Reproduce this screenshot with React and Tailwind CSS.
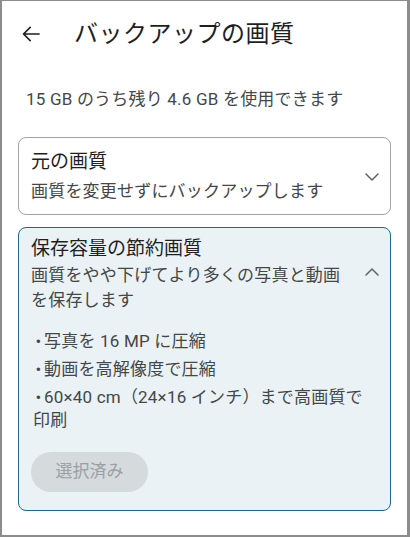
import React from 'react';
import { ChevronDown, ChevronUp } from 'lucide-react';

const font = { fontFamily: 'Roboto, "Noto Sans CJK JP", sans-serif' };

const bullets = [
  '写真を 16 MP に圧縮',
  '動画を高解像度で圧縮',
  '60×40 cm（24×16 インチ）まで高画質で印刷',
];

const App = () => {
  return (
    <div
      className="w-[410px] h-[537px] bg-white border-t border-l-2 border-r-[3px] border-b-2 border-[#8c8c8c] overflow-hidden"
      style={font}
    >
      {/* Header */}
      <div className="flex items-center h-[64px] pl-[16px] pt-[2px]">
        <svg viewBox="0 0 24 24" className="w-[26px] h-[26px] text-[#1f1f1f]" fill="currentColor">
          <path d="M20 11.2H6.9l5.3-5.3-1-1L4.1 12l7.1 7.1 1-1-5.3-5.3H20z" />
        </svg>
        <h1 className="ml-[30px] text-[24px] leading-8 text-[#1f1f1f] tracking-[0.5px]">
          バックアップの画質
        </h1>
      </div>

      {/* Storage */}
      <p className="mt-[22px] pl-[24px] text-[17px] leading-6 text-[#444746] tracking-[0.2px]">
        15 GB のうち残り 4.6 GB を使用できます
      </p>

      <div className="px-4 mt-[26px] flex flex-col gap-3">
        {/* Original quality */}
        <div className="flex items-center justify-between rounded-lg border border-[#a3a3a3] pl-[12px] pr-[6px] pt-[12px] pb-[11px]">
          <div>
            <div className="text-[19px] leading-6 text-[#1f1f1f]">元の画質</div>
            <div className="mt-[5px] text-[17px] leading-6 text-[#444746] tracking-[0.2px]">
              画質を変更せずにバックアップします
            </div>
          </div>
          <ChevronDown className="w-6 h-6 text-[#5f6368]" strokeWidth={1.5} />
        </div>

        {/* Storage saver */}
        <div className="rounded-lg border-[1.5px] border-[#1a6985] bg-[#eaf2f6] pl-[12px] pr-[6px] pt-[9px] pb-[18px]">
          <div className="flex justify-between">
            <div className="pr-[10px]">
              <div className="text-[19px] leading-6 text-[#1f1f1f]">保存容量の節約画質</div>
              <div className="mt-[2px] text-[17px] leading-[25px] text-[#444746] tracking-[0.2px]">
                画質をやや下げてより多くの写真と動画を保存します
              </div>
            </div>
            <ChevronUp className="w-6 h-6 mt-[23px] shrink-0 text-[#5f6368]" strokeWidth={1.5} />
          </div>

          <ul className="mt-[17px] pl-[2px] pr-[6px] flex flex-col gap-[5px] text-[17px] leading-[23px] text-[#444746] tracking-[0.2px]">
            {bullets.map((b) => (
              <li key={b}>
                <span className="inline-block w-[11px] text-center">•</span>
                {b}
              </li>
            ))}
          </ul>

          <button className="mt-[20px] h-[40px] w-[117px] rounded-full bg-[#d5dadd] text-[17px] text-[#9ba0a3]">
            選択済み
          </button>
        </div>
      </div>
    </div>
  );
};

export default App;
